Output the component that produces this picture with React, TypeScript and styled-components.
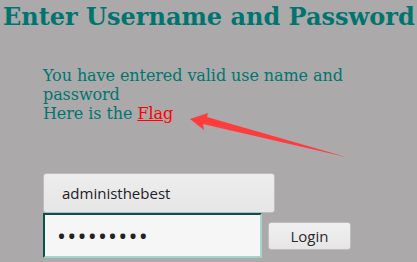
import React from 'react';
import styled, { createGlobalStyle } from 'styled-components';

const GlobalStyle = createGlobalStyle`
  html, body {
    margin: 0;
    padding: 0;
    background: #aba9a9;
  }
  body {
    width: 417px;
    height: 262px;
    overflow: hidden;
    font-family: "DejaVu Serif", serif;
  }
`;

const Page = styled.div`
  position: relative;
  width: 417px;
  height: 262px;
  overflow: hidden;
`;

const Title = styled.h2`
  margin: 0;
  padding: 2px 0 0 3px;
  color: #007570;
  font-family: "DejaVu Serif", serif;
  font-weight: bold;
  font-size: 24px;
  line-height: 30px;
  white-space: nowrap;
`;

const Message = styled.p`
  margin: 34px 0 0 43px;
  width: 320px;
  color: #007570;
  font-size: 16px;
  line-height: 19px;
  letter-spacing: -0.08px;
`;

const FlagLink = styled.a`
  color: #ff0000;
  text-decoration: underline;
`;

const Form = styled.form`
  display: flex;
  flex-direction: column;
  gap: 0;
  margin: 50px 0 0 43px;
`;

const Row = styled.div`
  display: flex;
  align-items: center;
  gap: 6px;
`;

const TextInput = styled.input<{ $focused?: boolean; $w: number }>`
  box-sizing: border-box;
  width: ${(p) => p.$w}px;
  height: ${(p) => (p.$focused ? 45 : 40)}px;
  padding: 0 18px;
  font-family: "Open Sans", "Noto Sans", sans-serif;
  font-size: 15px;
  color: #222;
  outline: none;
  border-radius: ${(p) => (p.$focused ? 0 : 3)}px;
  background: ${(p) => (p.$focused ? '#f6f6f6' : 'linear-gradient(#ededed, #e6e6e6)')};
  border: 1px solid #bdbdbd;
  ${(p) =>
    p.$focused &&
    `
    border-width: 2px;
    border-style: solid;
    border-color: #0c4f4c #a5d3d0 #a5d3d0 #0c4f4c;
    padding-left: 12px;
    font-size: 24px;
    letter-spacing: 1.2px;
  `}
`;

const LoginButton = styled.button`
  box-sizing: border-box;
  width: 83px;
  height: 28px;
  border: 1px solid #bdbdbd;
  border-radius: 3px;
  background: linear-gradient(#f0f0f0, #e6e6e6);
  font-family: "Open Sans", "Noto Sans", sans-serif;
  font-size: 15px;
  color: #2a2a2a;
  padding: 0;
`;

const Arrow = styled.svg`
  position: absolute;
  left: 0;
  top: 0;
  pointer-events: none;
`;

export default function App() {
  return (
    <Page>
      <GlobalStyle />
      <Title>Enter Username and Password</Title>
      <Message>
        You have entered valid use name and password
        <br />
        Here is the <FlagLink href="#">Flag</FlagLink>
      </Message>
      <Form onSubmit={(e) => e.preventDefault()}>
        <TextInput $w={232} type="text" defaultValue="administhebest" />
        <Row>
          <TextInput $w={219} $focused type="password" defaultValue="123456789" />
          <LoginButton type="submit">Login</LoginButton>
        </Row>
      </Form>
      <Arrow width="417" height="262" viewBox="0 0 417 262">
        <polygon points="190,119 208,113 207,117 346,157 203,124 204,130" fill="#ff3b3b" />
      </Arrow>
    </Page>
  );
}
